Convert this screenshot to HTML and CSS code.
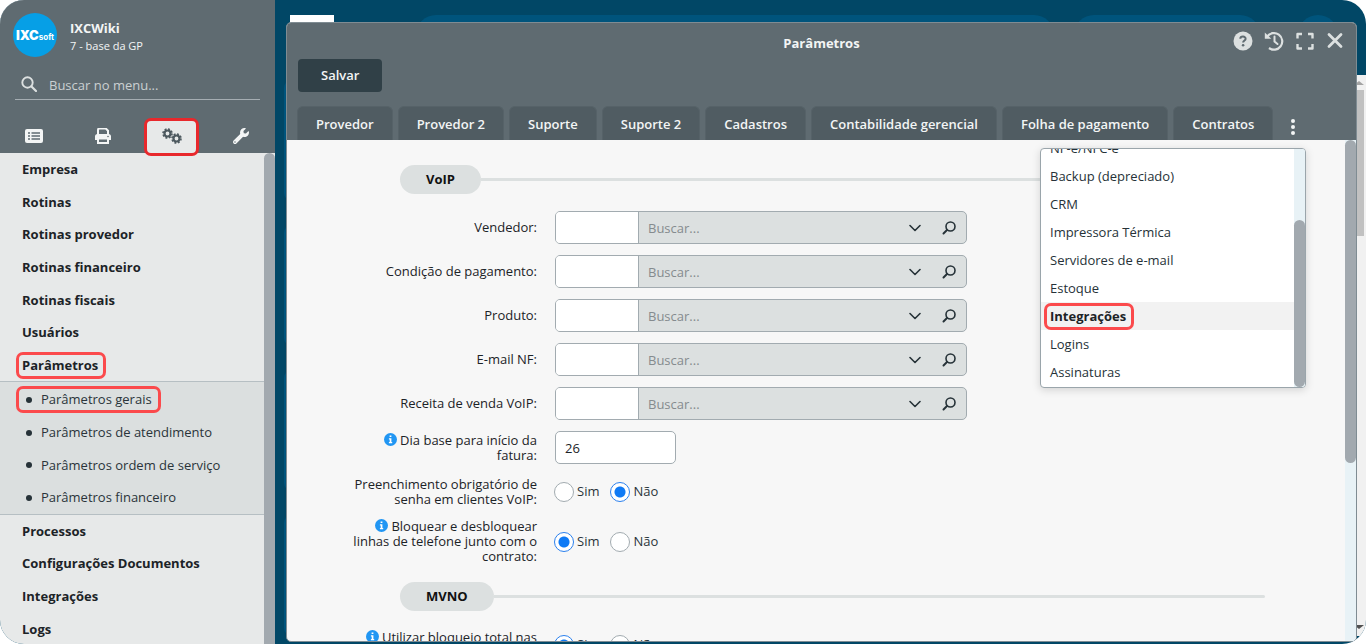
FILE: index.html
```html
<!DOCTYPE html>
<html lang="pt-BR">
<head>
<meta charset="utf-8">
<title>Parâmetros</title>
<meta name="viewport" content="width=device-width, initial-scale=1">
<link rel="stylesheet" href="styles.css">
</head>
<body>
<svg class="sprite" aria-hidden="true">
  <symbol id="chevron" viewBox="0 0 12 8"><path d="M1 1.500 6 6.500 11 1.500" fill="none" stroke="currentColor" stroke-width="1.600" stroke-linecap="round" stroke-linejoin="round"/></symbol>
  <symbol id="lens" viewBox="0 0 14 14"><circle cx="8.500" cy="5.500" r="4.500" fill="none" stroke="currentColor" stroke-width="1.600"/><path d="M5 9 1.500 12.500" stroke="currentColor" stroke-width="2" stroke-linecap="round"/></symbol>
  <symbol id="info" viewBox="0 0 13 13"><circle cx="6.500" cy="6.500" r="6.500" fill="#2196f3"/><path d="M5.600 2.500h1.800v1.600H5.600zM4.900 5.200h2.500v3.800h.8v1.200H4.900V9h.8V6.400h-.8z" fill="#fff"/></symbol>
</svg>
<div class="app">
  <aside class="sidebar">
    <header class="side-head">
      <div class="profile">
        <div class="avatar"><b>IXC</b><small>soft</small></div>
        <div class="who"><strong>IXCWiki</strong><span>7 - base da GP</span></div>
      </div>
      <label class="search">
        <svg viewBox="0 0 16 16" aria-hidden="true"><circle cx="6.500" cy="6.500" r="5.200" fill="none" stroke="currentColor" stroke-width="1.900"/><path d="m10.500 10.500 4.500 4.500" stroke="currentColor" stroke-width="2.200" stroke-linecap="round"/></svg>
        <input type="text" placeholder="Buscar no menu..." aria-label="Buscar no menu">
      </label>
      <div class="side-tabs">
        <button type="button" aria-label="Cadastros"><svg class="ic18" viewBox="0 0 18 14"><rect width="18" height="14" rx="2" fill="currentColor"/><path d="M3 4h2M3 7h2M3 10h2M6.500 4H15M6.500 7H15M6.500 10H15" stroke="#5f6b71" stroke-width="1.400"/></svg></button>
        <button type="button" aria-label="Relatórios"><svg class="ic16" viewBox="0 0 16 16"><path d="M3 6V2q0-1.500 1.500-1.500h6.300L13 2.700V6" fill="none" stroke="currentColor" stroke-width="2"/><path d="M2.500 6h11Q16 6 16 8.500V12h-2.500v-1.500h-11V12H0V8.500Q0 6 2.500 6z" fill="currentColor"/><path d="M3 10.500V15h10v-4.500z" fill="none" stroke="currentColor" stroke-width="2"/><circle cx="13" cy="8.500" r=".8" fill="#5f6b71"/></svg></button>
        <button type="button" class="active" aria-label="Configurações"><svg class="ic20" viewBox="0 0 20 16"><g fill="none" stroke="currentColor"><circle cx="5.500" cy="5.500" r="3" stroke-width="2.200"/><circle cx="5.500" cy="5.500" r="4.500" stroke-width="1.600" stroke-dasharray="1.960 1.574"/><circle cx="14.500" cy="10.500" r="3" stroke-width="2.200"/><circle cx="14.500" cy="10.500" r="4.500" stroke-width="1.600" stroke-dasharray="1.960 1.574"/></g></svg></button>
        <button type="button" aria-label="Ferramentas"><svg class="ic16" viewBox="0 0 512 512"><path fill="currentColor" d="M507.730 109.100c-2.240-9.030-13.540-12.090-20.120-5.510l-74.360 74.360-67.880-11.310-11.310-67.880 74.360-74.360c6.620-6.620 3.430-17.900-5.660-20.160-47.380-11.740-99.550.910-136.580 37.930-39.640 39.640-50.550 97.100-34.050 147.200L18.740 402.760c-24.990 24.990-24.990 65.510 0 90.500 24.990 24.990 65.510 24.990 90.500 0l213.210-213.210c50.120 16.710 107.470 5.680 147.370-34.220 37.070-37.070 49.700-89.320 37.910-136.730zM64 472c-13.250 0-24-10.750-24-24 0-13.260 10.750-24 24-24s24 10.740 24 24c0 13.250-10.750 24-24 24z"/></svg></button>
      </div>
    </header>
    <div class="side-body">
      <nav class="menu">
        <a href="#">Empresa</a>
        <a href="#">Rotinas</a>
        <a href="#">Rotinas provedor</a>
        <a href="#">Rotinas financeiro</a>
        <a href="#">Rotinas fiscais</a>
        <a href="#">Usuários</a>
        <a href="#"><span class="mark">Parâmetros</span></a>
        <div class="submenu">
          <a href="#"><span class="mark bullet">Parâmetros gerais</span></a>
          <a href="#"><span class="bullet">Parâmetros de atendimento</span></a>
          <a href="#"><span class="bullet">Parâmetros ordem de serviço</span></a>
          <a href="#"><span class="bullet">Parâmetros financeiro</span></a>
        </div>
        <a href="#">Processos</a>
        <a href="#">Configurações Documentos</a>
        <a href="#">Integrações</a>
        <a href="#">Logs</a>
      </nav>
      <div class="side-scroll"></div>
    </div>
  </aside>

  <main class="desktop">
    <div class="topbar">
      <div class="brand"></div>
      <div class="pill pill-wide"></div>
      <div class="pill pill-mid"></div>
      <div class="pill pill-round"></div>
    </div>
    <div class="workspace">
      <div class="tiles"><i></i><i></i><i></i><i></i></div>
      <div class="page-scroll"><span class="arrow up"></span><span class="thumb"></span><span class="arrow down"></span></div>
    </div>

    <section class="window">
      <header class="win-head">
        <div class="win-title">
          <h1>Parâmetros</h1>
          <div class="win-tools">
            <button type="button" aria-label="Ajuda"><svg class="ic20" viewBox="0 0 20 20"><circle cx="10" cy="10" r="9.500" fill="currentColor"/><path d="M7.300 7.800C7.400 4.800 12.800 4.900 12.600 7.900 12.500 9.500 10.300 9.600 10.100 11.500" fill="none" stroke="#5f6b71" stroke-width="2"/><circle cx="10.100" cy="14.200" r="1.300" fill="#5f6b71"/></svg></button>
            <button type="button" aria-label="Histórico"><svg class="ic20" viewBox="0 0 20 20"><g fill="none" stroke="currentColor" stroke-width="2.200"><path d="M3.200 5.500A8.300 8.300 0 1 1 5 17"/><path d="M10.500 5.500v5l3 2.500" stroke-linecap="round" stroke-width="2"/></g><path d="M.8 1.500v6.200h6.500z" fill="currentColor"/></svg></button>
            <button type="button" aria-label="Tela cheia"><svg class="ic20" viewBox="0 0 20 20"><path d="M2.500 7.500V3H7M13 3h4.500v4.500M17.500 13v4.500H13M7 17.500H2.500V13" fill="none" stroke="currentColor" stroke-width="2.400" stroke-linejoin="round"/></svg></button>
            <button type="button" aria-label="Fechar"><svg class="ic20" viewBox="0 0 20 20"><path d="m3 3.500 12 12M15 3.500l-12 12" stroke="currentColor" stroke-width="2.800" stroke-linecap="round"/></svg></button>
          </div>
        </div>
        <button type="button" class="save">Salvar</button>
        <div class="tabs">
          <button type="button">Provedor</button>
          <button type="button">Provedor 2</button>
          <button type="button">Suporte</button>
          <button type="button">Suporte 2</button>
          <button type="button">Cadastros</button>
          <button type="button">Contabilidade gerencial</button>
          <button type="button">Folha de pagamento</button>
          <button type="button">Contratos</button>
          <button type="button" class="more" aria-label="Mais abas"><svg viewBox="0 0 4 16"><g fill="currentColor"><circle cx="2" cy="2" r="2"/><circle cx="2" cy="8" r="2"/><circle cx="2" cy="14" r="2"/></g></svg></button>
        </div>
      </header>
      <div class="win-body">
        <form class="form">
          <h2 class="section"><span>VoIP</span></h2>
          <div class="row"><label for="f1">Vendedor:</label>
            <div class="lookup"><input id="f1" type="text"><input type="text" placeholder="Buscar..." aria-label="Buscar vendedor"><button type="button" aria-label="Abrir"><svg class="chev"><use href="#chevron"/></svg></button><button type="button" aria-label="Pesquisar"><svg class="lens"><use href="#lens"/></svg></button></div></div>
          <div class="row"><label for="f2">Condição de pagamento:</label>
            <div class="lookup"><input id="f2" type="text"><input type="text" placeholder="Buscar..." aria-label="Buscar condição"><button type="button" aria-label="Abrir"><svg class="chev"><use href="#chevron"/></svg></button><button type="button" aria-label="Pesquisar"><svg class="lens"><use href="#lens"/></svg></button></div></div>
          <div class="row"><label for="f3">Produto:</label>
            <div class="lookup"><input id="f3" type="text"><input type="text" placeholder="Buscar..." aria-label="Buscar produto"><button type="button" aria-label="Abrir"><svg class="chev"><use href="#chevron"/></svg></button><button type="button" aria-label="Pesquisar"><svg class="lens"><use href="#lens"/></svg></button></div></div>
          <div class="row"><label for="f4">E-mail NF:</label>
            <div class="lookup"><input id="f4" type="text"><input type="text" placeholder="Buscar..." aria-label="Buscar e-mail"><button type="button" aria-label="Abrir"><svg class="chev"><use href="#chevron"/></svg></button><button type="button" aria-label="Pesquisar"><svg class="lens"><use href="#lens"/></svg></button></div></div>
          <div class="row"><label for="f5">Receita de venda VoIP:</label>
            <div class="lookup"><input id="f5" type="text"><input type="text" placeholder="Buscar..." aria-label="Buscar receita"><button type="button" aria-label="Abrir"><svg class="chev"><use href="#chevron"/></svg></button><button type="button" aria-label="Pesquisar"><svg class="lens"><use href="#lens"/></svg></button></div></div>
          <div class="row"><label for="f6"><svg class="info"><use href="#info"/></svg> Dia base para início da fatura:</label>
            <input class="day" id="f6" type="text" value="26"></div>
          <div class="row"><span class="label" id="l7">Preenchimento obrigatório de senha em clientes VoIP:</span>
            <div class="radios" role="radiogroup" aria-labelledby="l7"><label><input type="radio" name="senha">Sim</label><label><input type="radio" name="senha" checked>Não</label></div></div>
          <div class="row"><span class="label" id="l8"><svg class="info"><use href="#info"/></svg> Bloquear e desbloquear linhas de telefone junto com o contrato:</span>
            <div class="radios" role="radiogroup" aria-labelledby="l8"><label><input type="radio" name="linhas" checked>Sim</label><label><input type="radio" name="linhas">Não</label></div></div>
          <h2 class="section"><span>MVNO</span></h2>
          <div class="row"><span class="label" id="l9"><svg class="info"><use href="#info"/></svg> Utilizar bloqueio total nas linhas:</span>
            <div class="radios" role="radiogroup" aria-labelledby="l9"><label><input type="radio" name="total" checked>Sim</label><label><input type="radio" name="total">Não</label></div></div>
        </form>
        <div class="win-scroll"><span></span></div>
        <div class="dropdown">
          <div class="options">
            <a href="#">NF-e/NFC-e</a>
            <a href="#">Backup (depreciado)</a>
            <a href="#">CRM</a>
            <a href="#">Impressora Térmica</a>
            <a href="#">Servidores de e-mail</a>
            <a href="#">Estoque</a>
            <a href="#" class="current"><span class="mark">Integrações</span></a>
            <a href="#">Logins</a>
            <a href="#">Assinaturas</a>
          </div>
          <div class="drop-scroll"><span></span></div>
        </div>
      </div>
    </section>
  </main>
</div>
</body>
</html>
```
FILE: styles.css
```css
* { box-sizing: border-box; }
body { margin: 0; background: #fff; color: #1c2327; font: 13px/18px "Open Sans", "Noto Sans", sans-serif; }
button, input { font: inherit; color: inherit; margin: 0; padding: 0; border: 0; background: none; outline: 0; min-width: 0; }
a { color: inherit; text-decoration: none; }
svg { display: block; flex: none; }
.sprite { display: none; }
.ic16 { width: 16px; height: 16px; }
.ic18 { width: 18px; height: 14px; }
.ic20 { width: 20px; height: 20px; }

.app { display: flex; height: 100vh; overflow: hidden; border-radius: 24px; background: #014766; }

/* Sidebar */
.sidebar { display: flex; flex-direction: column; width: 275px; flex: none; background: #e7e9e9; }
.side-head { background: #5f6b71; color: #f3f5f5; padding-top: 13px; }
.profile { display: flex; align-items: center; gap: 13px; padding: 0 13px; }
.avatar { display: flex; align-items: baseline; justify-content: center; width: 44px; height: 44px; border-radius: 50%; background: #069fe6; color: #fff; font-family: Inter, sans-serif; line-height: 44px; }
.avatar b { font-size: 13px; font-weight: 900; }
.avatar small { font-size: 8px; font-weight: 700; }
.who { display: flex; flex-direction: column; padding-top: 3px; font-size: 12px; line-height: 17px; }
.who span { font-size: 11px; }
.who strong { font-size: 13px; }
.search { display: flex; align-items: center; gap: 12px; margin: 13px 15px 0; padding: 0 6px 2px; height: 30px; border-bottom: 1px solid #a5adb2; color: #dce0e0; }
.search svg { width: 16px; height: 16px; }
.search input { flex: 1; padding-top: 2px; }
.search input::placeholder { color: #cbd0d2; opacity: 1; }
.side-tabs { display: grid; grid-template-columns: repeat(4, 1fr); padding-top: 18px; }
.side-tabs button { display: flex; align-items: center; justify-content: center; width: 55px; height: 38px; margin: 0 auto -3px; padding-bottom: 2px; }
.side-tabs .active { background: #e7e9e9; color: #4d595f; border: 3px solid #e8282c; border-radius: 7px; position: relative; }
.side-body { display: flex; flex: 1; min-height: 0; }
.side-scroll { width: 11px; background: #a2a9af; border-radius: 6px 6px 0 0; }
.menu { display: flex; flex-direction: column; flex: 1; margin-bottom: -1px; font-weight: 700; }
.menu a { display: flex; align-items: center; flex: 1; padding-left: 22px; }
.submenu { display: flex; flex-direction: column; flex: 4; padding-top: 1px; background: #dbdfdf; border: solid #b6bfc3; border-width: 1px 0; font-weight: 400; }
.submenu a { color: #2a343a; padding-left: 26px; }
.bullet { display: flex; align-items: center; gap: 9px; }
.bullet::before { content: ""; width: 6px; height: 6px; margin-top: 1px; border-radius: 50%; background: #263238; }
.mark { position: relative; }
.mark::after { content: ""; position: absolute; inset: -4px -8px -5px -6px; border: 3px solid #fb4a4c; border-radius: 7px; }
.mark.bullet::after { inset: -4px -9px -5px -10px; }

/* Page behind the window */
.desktop { position: relative; display: flex; flex-direction: column; flex: 1; min-width: 0; }
.topbar { display: flex; height: 75px; padding: 15px 28px 0 15px; }
.brand { width: 44px; height: 30px; background: #fff; }
.pill { height: 40px; background: #00547c; border-radius: 20px; }
.pill-wide { flex: 1; margin-left: 82px; }
.pill-mid { width: 186px; margin: 0 38px 0 20px; }
.pill-round { width: 40px; }
.workspace { display: flex; justify-content: space-between; flex: 1; margin-bottom: 8px; }
.tiles { display: flex; flex-direction: column; gap: 24px; padding: 5px 0 0 9px; }
.tiles i { width: 60px; height: 121px; border-radius: 8px; background: #00547c; }
.page-scroll { display: flex; flex-direction: column; width: 9px; background: #f1f1f1; }
.page-scroll .thumb { width: 7px; height: 146px; background: #c1c1c1; margin-top: 5px; }
.arrow { border: solid transparent; border-width: 0 5px; }
.arrow.up { width: 0; margin: 6px 0 0 -3px; border-bottom: 4px solid #a3a3a3; }
.arrow.down { width: 0; margin: auto 0 7px -3px; border-top: 4px solid #505050; }

/* Window */
.window { position: absolute; inset: 22px 9px 2px 11px; display: flex; flex-direction: column; border: 1px solid #7f8c93; border-radius: 5px; background: #f7f7f7; overflow: hidden; }
.win-head { background: #5f6b71; color: #f3f5f5; padding: 0 10px; }
.win-title { display: grid; grid-template-columns: 1fr auto 1fr; align-items: center; height: 36px; }
.win-title h1 { grid-column: 2; margin: 0; padding-top: 4px; font-size: 13px; line-height: 18px; }
.win-tools { display: flex; justify-content: flex-end; gap: 11px; color: #dce0e0; }
.save { display: block; height: 33px; padding: 0 23px 2px; margin-left: 1px; border-radius: 4px; background: #304047; font-weight: 600; }
.tabs { display: flex; gap: 5px; margin-top: 14px; }
.tabs button { height: 34px; padding: 0 18px; background: #505c62; border: 1px solid #566268; border-bottom: 0; border-radius: 6px 6px 0 0; font-weight: 600; white-space: nowrap; }
.tabs .more { background: none; border: 0; padding: 7px 13px 0; }
.more svg { width: 4px; height: 16px; }
.win-body { position: relative; display: flex; flex: 1; min-height: 0; }
.form { flex: 1; overflow: hidden; display: flex; flex-direction: column; gap: 11px; padding-top: 25px; }
.section { display: flex; align-items: center; flex: none; margin: 0 80px 6px 113px; font-size: 13px; line-height: 29px; color: #111; }
.section span { padding: 0 26px; border-radius: 15px; background: #dce0e0; }
.section::after { content: ""; flex: 1; height: 3px; border-radius: 0 2px 2px 0; background: #dce0e0; }
.row + .section { margin-top: 7px; }
.row { display: grid; grid-template-columns: 190px 1fr; column-gap: 18px; align-items: center; flex: none; min-height: 33px; margin-left: 60px; line-height: 15px; }
.row > label, .label { text-align: right; }
.info { display: inline-block; width: 13px; height: 13px; vertical-align: -1px; }
.lookup { display: flex; width: 412px; height: 33px; border: 1px solid #a2abb0; border-radius: 5px; background: #dce0e0; overflow: hidden; }
.lookup input:first-child { width: 83px; padding: 0 8px; background: #fff; border-right: 1px solid #a2abb0; }
.lookup input + input { flex: 1; padding: 2px 9px 0; }
.lookup input::placeholder { color: #858b8e; opacity: 1; }
.lookup button { display: flex; align-items: center; justify-content: center; width: 34px; color: #263238; }
.chev { width: 12px; height: 8px; }
.lens { width: 14px; height: 14px; }
.day { width: 121px; height: 33px; padding: 1px 9px 0; background: #fff; border: 1px solid #a2abb0; border-radius: 5px; }
.radios { display: flex; gap: 11px; margin-left: -1px; color: #2a343a; }
.radios label { display: flex; align-items: center; gap: 3px; }
.radios input { appearance: none; width: 20px; height: 20px; border: 1px solid #a2abb0; border-radius: 50%; background: #fff; }
.radios input:checked { border-color: #2a80ee; background: radial-gradient(circle, #0f7af5 5px, #fff 6px); }
.win-scroll { width: 11px; background: #e8f2f6; }
.win-scroll span { display: block; height: 323px; max-height: 65%; border-radius: 6px; background: #a2a9af; }

/* Overflow tab list */
.dropdown { position: absolute; top: 8px; right: 50px; display: flex; width: 266px; height: 240px; border: 1px solid #9aa5ab; border-radius: 4px; background: #fff; box-shadow: 0 2px 8px rgba(0, 0, 0, .15); overflow: hidden; }
.options { display: flex; flex-direction: column; justify-content: flex-end; flex: 1; padding-bottom: 1px; }
.options a { display: flex; align-items: center; flex: none; height: 28px; padding-left: 9px; color: #263238; }
.options .current { background: #f2f2f2; color: #1c2327; font-weight: 700; }
.drop-scroll { display: flex; align-items: flex-end; width: 11px; background: #e8f2f6; }
.drop-scroll span { width: 11px; height: 70%; border-radius: 6px; background: #a2a9af; }
```
